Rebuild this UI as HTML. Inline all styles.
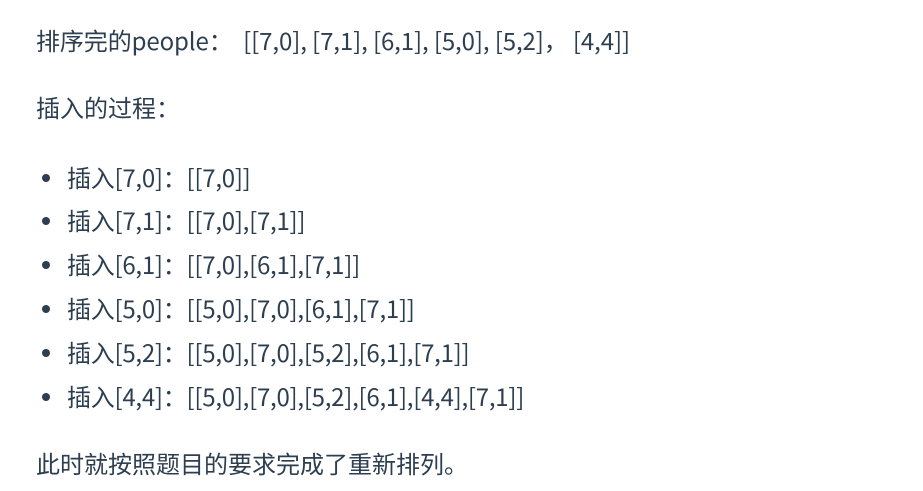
<!DOCTYPE html>
<html><head><meta charset="utf-8"><style>
html,body{margin:0;padding:0;background:#fff;width:923px;height:491px;overflow:hidden}
body{font-family:"Noto Sans CJK SC",sans-serif;font-size:24px;color:#2c3e50}
.l{position:absolute;left:36px;white-space:pre;line-height:32px}
.b{left:67px;letter-spacing:-0.25px}
.d{position:absolute;left:42px;width:8px;height:8px;border-radius:50%;background:#2c3e50}
</style></head><body>
<div class="l" style="top:24px;letter-spacing:-0.1px">排序完的people：  [[7,0], [7,1], [6,1], [5,0], [5,2]， [4,4]]</div>
<div class="l" style="top:91px">插入的过程：</div>
<div class="d" style="top:174px"></div><div class="l b" style="top:161px">插入[7,0]：[[7,0]]</div>
<div class="d" style="top:217px"></div><div class="l b" style="top:204px">插入[7,1]：[[7,0],[7,1]]</div>
<div class="d" style="top:261px"></div><div class="l b" style="top:248px">插入[6,1]：[[7,0],[6,1],[7,1]]</div>
<div class="d" style="top:305px"></div><div class="l b" style="top:292px">插入[5,0]：[[5,0],[7,0],[6,1],[7,1]]</div>
<div class="d" style="top:349px"></div><div class="l b" style="top:336px">插入[5,2]：[[5,0],[7,0],[5,2],[6,1],[7,1]]</div>
<div class="d" style="top:393px"></div><div class="l b" style="top:380px">插入[4,4]：[[5,0],[7,0],[5,2],[6,1],[4,4],[7,1]]</div>
<div class="l" style="top:447px">此时就按照题目的要求完成了重新排列。</div>
</body></html>
